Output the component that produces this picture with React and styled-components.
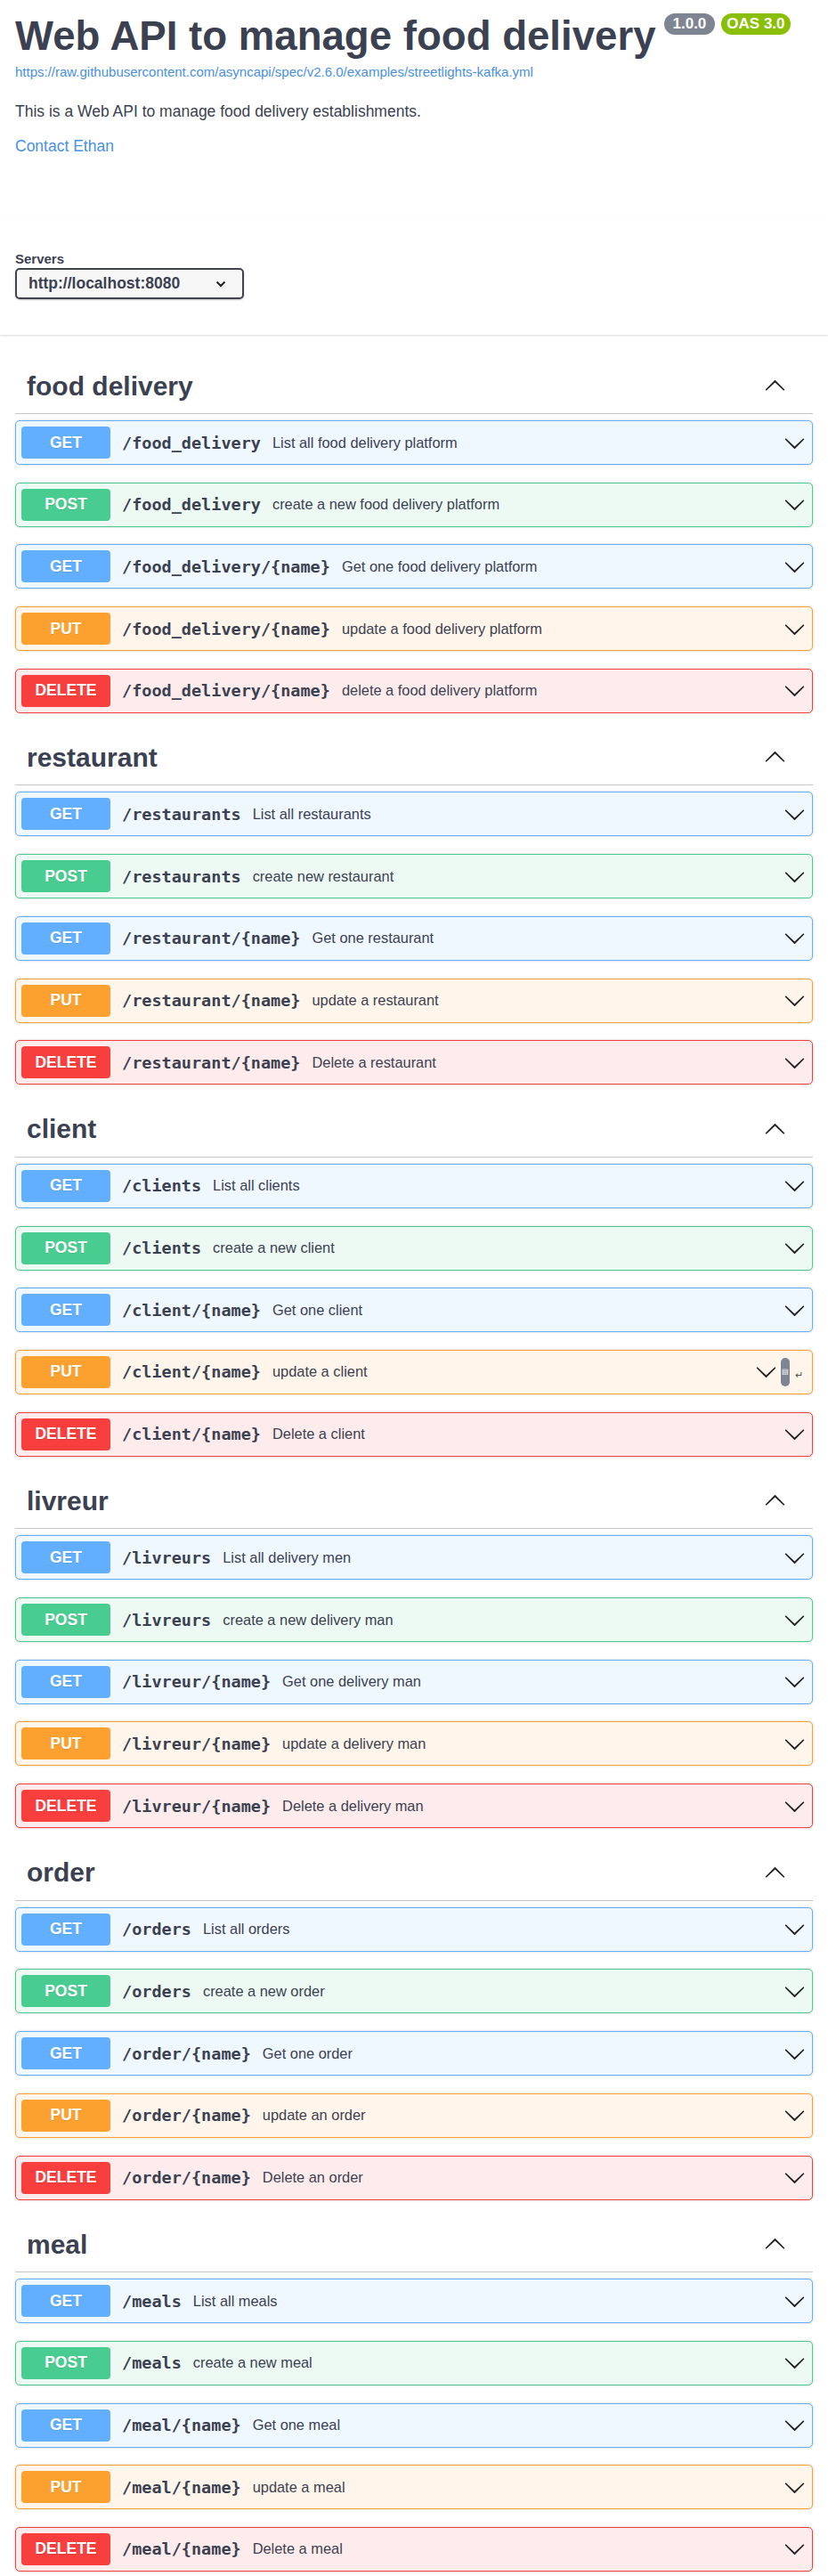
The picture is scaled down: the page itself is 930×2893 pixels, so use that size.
import styled, { createGlobalStyle } from "styled-components";

/* ---------- global ---------- */

const Global = createGlobalStyle`
  body {
    margin: 0;
    background: #fff;
    font-family: "Liberation Sans", Arial, sans-serif;
    color: #3b4151;
  }
  * { box-sizing: border-box; }
`;

const METHODS = {
  GET: { main: "#61affe", soft: "#eff7ff" },
  POST: { main: "#49cc90", soft: "#edfaf4" },
  PUT: { main: "#fca130", soft: "#fff5ea" },
  DELETE: { main: "#f93e3e", soft: "#feecec" },
};

/* ---------- info ---------- */

const Info = styled.div`
  padding: 15px 17px 0;
`;

const TitleRow = styled.div`
  display: flex;
  align-items: flex-start;
  gap: 7px;
`;

const Title = styled.h2`
  margin: 0 2px 0 0;
  font-size: 45.6px;
  line-height: 52px;
  font-weight: 700;
  color: #3b4151;
`;

const Badge = styled.span`
  display: inline-flex;
  align-items: center;
  height: 24px;
  padding: 0 ${(p) => p.$pad}px;
  border-radius: 57px;
  background: ${(p) => p.$bg};
  color: #fff;
  font-size: 17px;
  font-weight: 700;
`;

const BaseUrl = styled.a`
  display: block;
  margin-top: 5px;
  font-size: 15px;
  line-height: 17px;
  color: #4990e2;
  text-decoration: none;
`;

const Description = styled.p`
  margin: 26px 0 0;
  font-size: 17.5px;
  line-height: 20px;
`;

const Contact = styled.a`
  display: block;
  margin-top: 19px;
  font-size: 17.5px;
  line-height: 20px;
  color: #4990e2;
  text-decoration: none;
`;

/* ---------- servers ---------- */

const SchemeContainer = styled.div`
  margin-top: 70px;
  padding: 38px 17px 40px;
  background: #fff;
  box-shadow: 0 1px 2px 0 rgba(0, 0, 0, 0.15);
`;

const ServersTitle = styled.div`
  font-size: 15px;
  line-height: 17px;
  font-weight: 700;
  margin-bottom: 2px;
`;

const Select = styled.div`
  width: 257px;
  height: 35px;
  display: flex;
  align-items: center;
  justify-content: space-between;
  padding: 0 18px 0 13px;
  border: 2px solid #41444e;
  border-radius: 5px;
  background: #f7f7f7;
  box-shadow: 0 1px 2px 0 rgba(0, 0, 0, 0.25);
  font-size: 17.5px;
  font-weight: 700;
  color: #3b4151;
`;

/* ---------- operations ---------- */

const Operations = styled.div`
  padding: 27px 17px 0;
`;

const Section = styled.section``;

const TagHeader = styled.div`
  height: 62px;
  display: flex;
  align-items: center;
  justify-content: space-between;
  padding: 0 30px 0 13px;
  border-bottom: 1px solid rgba(59, 65, 81, 0.3);
  margin-bottom: 7px;
`;

const TagName = styled.h3`
  margin: 0;
  font-size: 30px;
  font-weight: 700;
  color: #3b4151;
`;

const Op = styled.div`
  height: 50px;
  margin-bottom: 19.7px;
  display: flex;
  align-items: center;
  padding: 0 7px 0 6px;
  border: 1px solid ${(p) => METHODS[p.$m].main};
  background: ${(p) => METHODS[p.$m].soft};
  border-radius: 5px;
  box-shadow: 0 0 3px rgba(0, 0, 0, 0.19);
`;

const Method = styled.span`
  flex: none;
  width: 100px;
  height: 36px;
  display: flex;
  align-items: center;
  justify-content: center;
  border-radius: 4px;
  background: ${(p) => METHODS[p.$m].main};
  color: #fff;
  font-size: 17.5px;
  font-weight: 700;
  text-shadow: 0 1px 0 rgba(0, 0, 0, 0.1);
`;

const Path = styled.span`
  padding: 0 13px;
  font-family: "DejaVu Sans Mono", monospace;
  font-size: 18.5px;
  font-weight: 700;
  color: #3b4151;
  white-space: nowrap;
`;

const Summary = styled.span`
  flex: 1;
  font-size: 16.4px;
  color: #3b4151;
  white-space: nowrap;
`;

const Pill = styled.span`
  width: 10px;
  height: 32px;
  margin-left: 4px;
  border-radius: 5px;
  background: #7d8492;
  display: flex;
  align-items: center;
  justify-content: center;
  color: #fff;
  font-size: 8px;
`;

const Enter = styled.span`
  margin: 8px 3px 0 6px;
  font-size: 11px;
  color: #555;
`;

const Arrow = ({ up, size = 25 }) => (
  <svg
    width={size}
    height={size}
    viewBox="0 0 20 20"
    style={{ transform: up ? "rotate(180deg)" : "none", flex: "none" }}
  >
    <path
      fill="#222"
      d="M17.418 6.109c.272-.268.709-.268.979 0s.271.701 0 .969l-7.908 7.83c-.27.268-.707.268-.979 0l-7.908-7.83c-.27-.268-.27-.701 0-.969.271-.268.709-.268.979 0L10 13.25l7.418-7.141z"
    />
  </svg>
);

const SmallChevron = () => (
  <svg width="12" height="8" viewBox="0 0 12 8">
    <path d="M1.5 1.5 L6 6 L10.5 1.5" fill="none" stroke="#222" strokeWidth="2" />
  </svg>
);

const TAGS = [
  {
    name: "food delivery",
    ops: [
      ["GET", "/food_delivery", "List all food delivery platform"],
      ["POST", "/food_delivery", "create a new food delivery platform"],
      ["GET", "/food_delivery/{name}", "Get one food delivery platform"],
      ["PUT", "/food_delivery/{name}", "update a food delivery platform"],
      ["DELETE", "/food_delivery/{name}", "delete a food delivery platform"],
    ],
  },
  {
    name: "restaurant",
    ops: [
      ["GET", "/restaurants", "List all restaurants"],
      ["POST", "/restaurants", "create new restaurant"],
      ["GET", "/restaurant/{name}", "Get one restaurant"],
      ["PUT", "/restaurant/{name}", "update a restaurant"],
      ["DELETE", "/restaurant/{name}", "Delete a restaurant"],
    ],
  },
  {
    name: "client",
    ops: [
      ["GET", "/clients", "List all clients"],
      ["POST", "/clients", "create a new client"],
      ["GET", "/client/{name}", "Get one client"],
      ["PUT", "/client/{name}", "update a client", true],
      ["DELETE", "/client/{name}", "Delete a client"],
    ],
  },
  {
    name: "livreur",
    ops: [
      ["GET", "/livreurs", "List all delivery men"],
      ["POST", "/livreurs", "create a new delivery man"],
      ["GET", "/livreur/{name}", "Get one delivery man"],
      ["PUT", "/livreur/{name}", "update a delivery man"],
      ["DELETE", "/livreur/{name}", "Delete a delivery man"],
    ],
  },
  {
    name: "order",
    ops: [
      ["GET", "/orders", "List all orders"],
      ["POST", "/orders", "create a new order"],
      ["GET", "/order/{name}", "Get one order"],
      ["PUT", "/order/{name}", "update an order"],
      ["DELETE", "/order/{name}", "Delete an order"],
    ],
  },
  {
    name: "meal",
    ops: [
      ["GET", "/meals", "List all meals"],
      ["POST", "/meals", "create a new meal"],
      ["GET", "/meal/{name}", "Get one meal"],
      ["PUT", "/meal/{name}", "update a meal"],
      ["DELETE", "/meal/{name}", "Delete a meal"],
    ],
  },
];

export default function App() {
  return (
    <>
      <Global />
      <Info>
        <TitleRow>
          <Title>Web API to manage food delivery</Title>
          <Badge $bg="#7d8492" $pad={10}>1.0.0</Badge>
          <Badge $bg="#89bf04" $pad={6}>OAS 3.0</Badge>
        </TitleRow>
        <BaseUrl href="#">
          https://raw.githubusercontent.com/asyncapi/spec/v2.6.0/examples/streetlights-kafka.yml
        </BaseUrl>
        <Description>This is a Web API to manage food delivery establishments.</Description>
        <Contact href="#">Contact Ethan</Contact>
      </Info>

      <SchemeContainer>
        <ServersTitle>Servers</ServersTitle>
        <Select>
          <span>http://localhost:8080</span>
          <SmallChevron />
        </Select>
      </SchemeContainer>

      <Operations>
        {TAGS.map((tag) => (
          <Section key={tag.name}>
            <TagHeader>
              <TagName>{tag.name}</TagName>
              <Arrow up />
            </TagHeader>
            {tag.ops.map(([m, path, summary, extra], i) => (
              <Op key={i} $m={m}>
                <Method $m={m}>{m}</Method>
                <Path>{path}</Path>
                <Summary>{summary}</Summary>
                <Arrow />
                {extra && (
                  <>
                    <Pill>▤</Pill>
                    <Enter>↵</Enter>
                  </>
                )}
              </Op>
            ))}
          </Section>
        ))}
      </Operations>
    </>
  );
}
